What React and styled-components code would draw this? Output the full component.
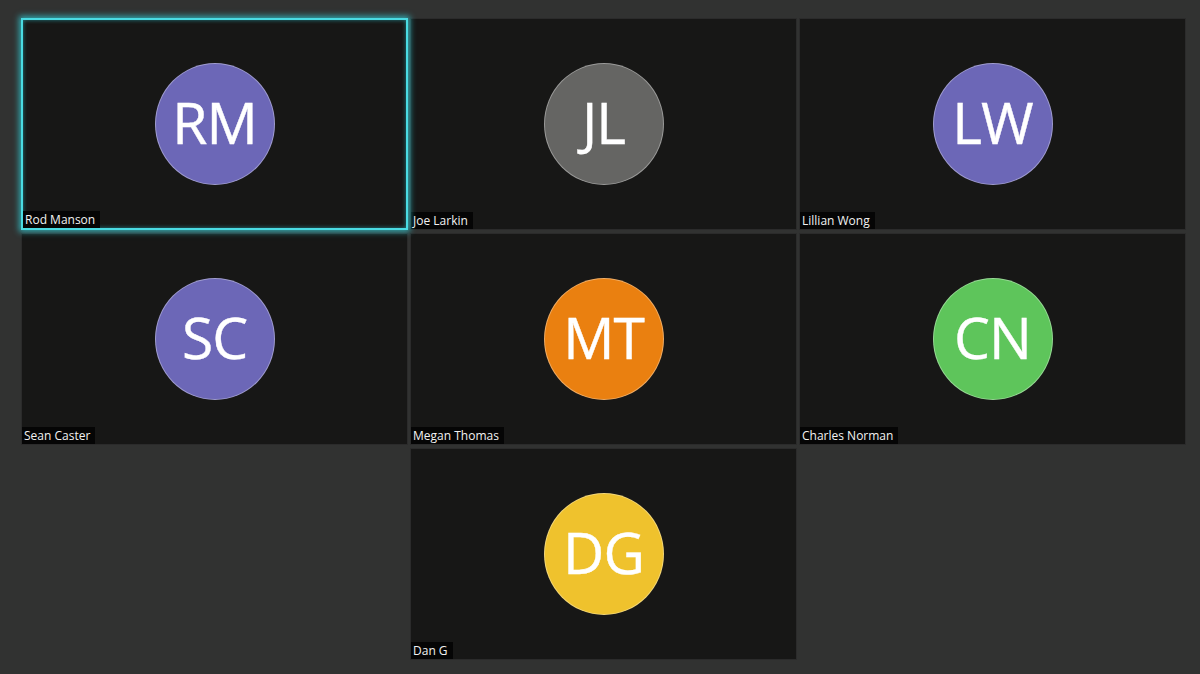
import React from "react";
import styled, { createGlobalStyle, css } from "styled-components";

const Global = createGlobalStyle`
  html, body { margin: 0; padding: 0; background: #313231; }
  body { font-family: "Open Sans", "Noto Sans", sans-serif; }
`;

const Stage = styled.div`
  width: 1200px;
  height: 674px;
  box-sizing: border-box;
  padding: 18px 14px 0 21px;
  background: #313231;
`;

const Grid = styled.div`
  display: flex;
  flex-wrap: wrap;
  justify-content: center;
  gap: 3px 2px;
  width: 1165px;
`;

const Tile = styled.div`
  position: relative;
  box-sizing: border-box;
  width: 387px;
  height: 212px;
  background: #171716;
  border: 1px solid #2b2b2b;
  display: flex;
  align-items: center;
  justify-content: center;
  ${(p) =>
    p.$active &&
    css`
      border: 2px solid #4adbe2;
      box-shadow: 0 0 6px 2px rgba(50, 215, 225, 0.7),
        inset 0 0 4px rgba(50, 215, 225, 0.55);
      z-index: 1;
    `}
`;

const Avatar = styled.div`
  width: 118px;
  height: 118px;
  border-radius: 50%;
  background: ${(p) => p.$color};
  border: 1px solid rgba(255, 255, 255, 0.35);
  display: flex;
  align-items: center;
  justify-content: center;
  color: #fff;
  font-family: "Open Sans", "Noto Sans", sans-serif;
  font-size: 57px;
  font-weight: 400;
  letter-spacing: -1px;
  line-height: 1;
  padding-bottom: 2px;
  margin-top: -1px;
  -webkit-text-stroke: 0.4px #fff;
`;

const NameTag = styled.span`
  position: absolute;
  left: 0;
  bottom: 0;
  background: #050505;
  color: #f2f2f2;
  font-family: "Open Sans", "Noto Sans", sans-serif;
  font-size: 12px;
  line-height: 17px;
  padding: 0 5px 0 2px;
`;

const people = [
  { initials: "RM", name: "Rod Manson", color: "#6c67b7", active: true },
  { initials: "JL", name: "Joe Larkin", color: "#656563" },
  { initials: "LW", name: "Lillian Wong", color: "#6c67b7" },
  { initials: "SC", name: "Sean Caster", color: "#6c67b7" },
  { initials: "MT", name: "Megan Thomas", color: "#ea8010" },
  { initials: "CN", name: "Charles Norman", color: "#5ec55b" },
  { initials: "DG", name: "Dan G", color: "#efc22d" },
];

export default function App() {
  return (
    <>
      <Global />
      <Stage>
        <Grid>
          {people.map((p) => (
            <Tile key={p.name} $active={p.active}>
              <Avatar $color={p.color}>{p.initials}</Avatar>
              <NameTag>{p.name}</NameTag>
            </Tile>
          ))}
        </Grid>
      </Stage>
    </>
  );
}
